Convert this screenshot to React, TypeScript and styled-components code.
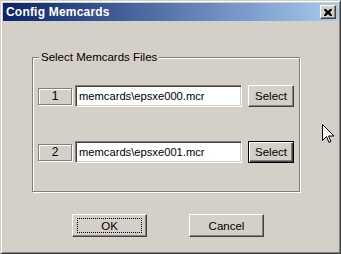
import React from "react";
import styled, { createGlobalStyle } from "styled-components";

const Global = createGlobalStyle`
  html, body { margin: 0; padding: 0; background: #D4D0C8; }
  body { font-family: "Liberation Sans", Arial, sans-serif; font-size: 11px; color: #000; }
`;

const Window = styled.div`
  position: relative;
  width: 341px;
  height: 254px;
  box-sizing: border-box;
  background: #D4D0C8;
  border: 1px solid;
  border-color: #D4D0C8 #404040 #404040 #D4D0C8;
  box-shadow: inset 1px 1px 0 #ffffff, inset -1px -1px 0 #808080;
  padding: 2px;
  display: flex;
  flex-direction: column;
`;

const TitleBar = styled.div`
  height: 18px;
  display: flex;
  align-items: center;
  justify-content: space-between;
  padding-left: 3px;
  padding-right: 2px;
  background: linear-gradient(to right, #0A246A, #A6CAF0);
`;

const TitleText = styled.span`
  color: #fff;
  font-weight: bold;
  font-size: 12px;
  letter-spacing: 0.2px;
`;

const CloseButton = styled.div`
  width: 16px;
  height: 14px;
  box-sizing: border-box;
  background: #D4D0C8;
  border: 1px solid;
  border-color: #fff #404040 #404040 #fff;
  box-shadow: inset -1px -1px 0 #808080;
  display: flex;
  align-items: center;
  justify-content: center;
`;

const Body = styled.div`
  display: flex;
  flex-direction: column;
  padding-left: 29px;
`;

const Group = styled.div`
  position: relative;
  margin-top: 36px;
  width: 268px;
  height: 135px;
  box-sizing: border-box;
  border: 1px solid #808080;
  box-shadow: inset 1px 1px 0 #fff, 1px 1px 0 #fff;
  padding: 27px 0 0 5px;
  display: flex;
  flex-direction: column;
  gap: 34px;
`;

const GroupLabel = styled.span`
  position: absolute;
  top: -7px;
  left: 6px;
  padding: 0 2px;
  line-height: 13px;
  font-size: 11.5px;
  background: #D4D0C8;
`;

const Row = styled.div`
  display: flex;
  align-items: center;
  height: 22px;
`;

const NumberBox = styled.div`
  width: 34px;
  height: 17px;
  box-sizing: border-box;
  border: 1px solid #808080;
  box-shadow: inset 1px 1px 0 #fff, 1px 1px 0 #fff;
  display: flex;
  align-items: center;
  justify-content: center;
  margin-right: 3px;
  font-size: 12px;
`;

const TextBox = styled.div`
  width: 167px;
  height: 22px;
  box-sizing: border-box;
  background: #fff;
  border: 1px solid;
  border-color: #808080 #fff #fff #808080;
  box-shadow: inset 1px 1px 0 #404040, inset -1px -1px 0 #D4D0C8;
  display: flex;
  align-items: center;
  padding-left: 3px;
  margin-right: 6px;
  white-space: nowrap;
  font-size: 11.2px;
`;

const Button = styled.div<{ $w: number; $h: number; $default?: boolean }>`
  width: ${(p) => p.$w}px;
  height: ${(p) => p.$h}px;
  box-sizing: border-box;
  background: #D4D0C8;
  border: 1px solid;
  border-color: ${(p) => (p.$default ? "#000" : "#fff #404040 #404040 #fff")};
  box-shadow: ${(p) =>
    p.$default
      ? "inset 1px 1px 0 #fff, inset -1px -1px 0 #404040, inset -2px -2px 0 #808080"
      : "inset -1px -1px 0 #808080"};
  display: flex;
  align-items: center;
  justify-content: center;
  font-size: 11.5px;
`;

const FocusLabel = styled.span`
  display: flex;
  align-items: center;
  justify-content: center;
  width: 65px;
  height: 15px;
  box-sizing: border-box;
  border: 1px dotted #000;
`;

const ButtonRow = styled.div`
  display: flex;
  gap: 42px;
  margin-top: 22px;
  padding-left: 40px;
`;

const Cursor = styled.svg`
  position: absolute;
  left: 321px;
  top: 123px;
`;

const rows = [
  { n: "1", file: "memcards\\epsxe000.mcr", def: false },
  { n: "2", file: "memcards\\epsxe001.mcr", def: true },
];

export default function App() {
  return (
    <>
      <Global />
      <Window>
        <TitleBar>
          <TitleText>Config Memcards</TitleText>
          <CloseButton>
            <svg width="8" height="7" viewBox="0 0 8 7">
              <path d="M0 0h2l2 2 2-2h2v1L6 3.5 8 6v1H6L4 5 2 7H0V6l2-2.5L0 1z" fill="#000" />
            </svg>
          </CloseButton>
        </TitleBar>
        <Body>
          <Group>
            <GroupLabel>Select Memcards Files</GroupLabel>
            {rows.map((r) => (
              <Row key={r.n}>
                <NumberBox>{r.n}</NumberBox>
                <TextBox>{r.file}</TextBox>
                <Button $w={46} $h={22} $default={r.def}>Select</Button>
              </Row>
            ))}
          </Group>
          <ButtonRow>
            <Button $w={75} $h={23}>
              <FocusLabel>OK</FocusLabel>
            </Button>
            <Button $w={75} $h={23}>Cancel</Button>
          </ButtonRow>
        </Body>
        <Cursor width="12" height="20" viewBox="0 0 12 20">
          <path d="M0.5 0.5v16l4-4 2.5 6 2-1-2.5-5.5h5.5z" fill="#fff" stroke="#000" strokeWidth="1" />
        </Cursor>
      </Window>
    </>
  );
}
